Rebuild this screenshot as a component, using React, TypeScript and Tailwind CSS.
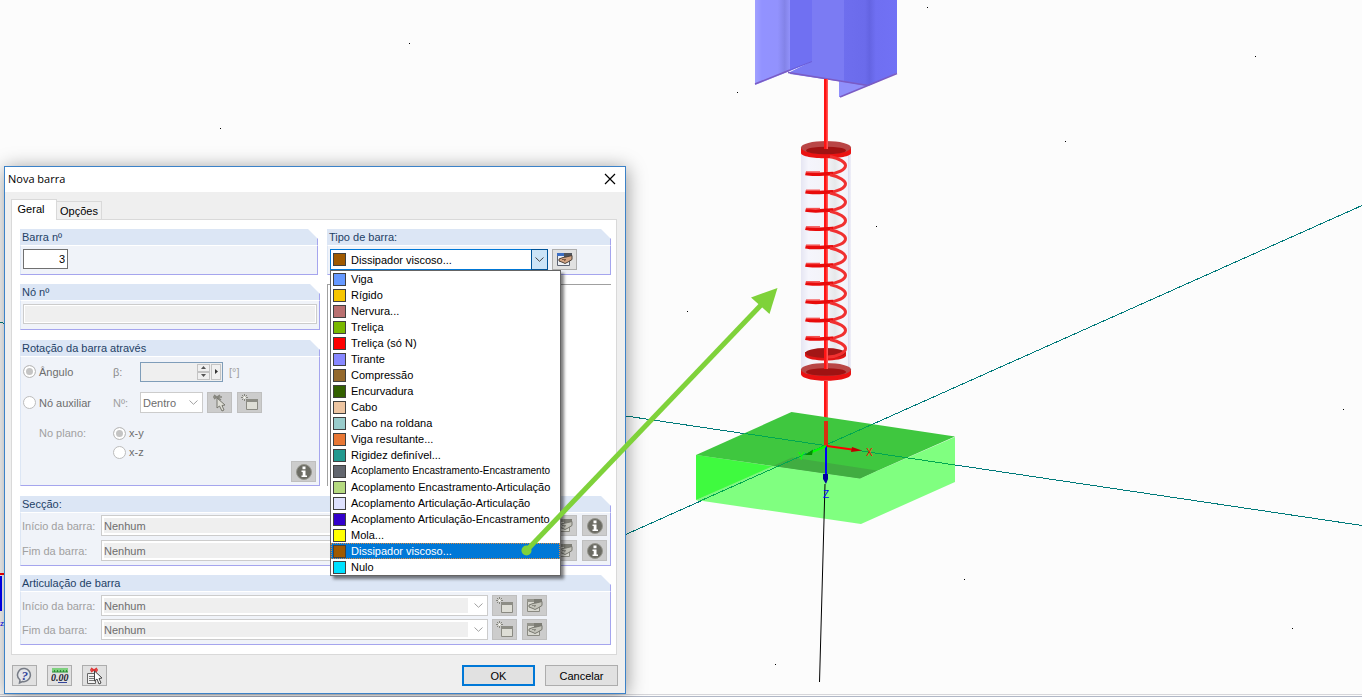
import type { ReactNode } from "react";
import clsx from "clsx";

const memberTypes = [
  { label: "Viga", color: "#6699ff" },
  { label: "Rígido", color: "#f7c600" },
  { label: "Nervura...", color: "#b97070" },
  { label: "Treliça", color: "#7ab800" },
  { label: "Treliça (só N)", color: "#ff0000" },
  { label: "Tirante", color: "#8888ff" },
  { label: "Compressão", color: "#94692d" },
  { label: "Encurvadura", color: "#336000" },
  { label: "Cabo", color: "#edc5a2" },
  { label: "Cabo na roldana", color: "#99cccc" },
  { label: "Viga resultante...", color: "#e87735" },
  { label: "Rigidez definível...", color: "#22998f" },
  { label: "Acoplamento Encastramento-Encastramento", color: "#62666e" },
  { label: "Acoplamento Encastramento-Articulação", color: "#b5da80" },
  { label: "Acoplamento Articulação-Articulação", color: "#dfe2ff" },
  { label: "Acoplamento Articulação-Encastramento", color: "#3300cc" },
  { label: "Mola...", color: "#ffff00" },
  { label: "Dissipador viscoso...", color: "#a05a00" },
  { label: "Nulo", color: "#00e1ff" },
];

const selectedType = "Dissipador viscoso...";

const gridPoints = [
  [409, 43], [927, 7], [1255, 56], [737, 92], [220, 128], [1065, 141], [876, 226],
  [687, 311], [1343, 409], [964, 579], [1292, 628], [775, 664],
];

const coils = Array.from({ length: 11 }, (_, i) => 173.5 + i * 18.3);

function Scene() {
  return (
    <svg className="absolute inset-0 h-full w-full" viewBox="0 0 1362 697" preserveAspectRatio="xMinYMin slice" aria-hidden="true">
      <defs>
        <linearGradient id="tube">
          <stop offset="0" stopColor="#e6e6f3" />
          <stop offset="0.15" stopColor="#f5f5fc" />
          <stop offset="0.5" stopColor="#f3f3f8" />
          <stop offset="0.68" stopColor="#e6e8ea" />
          <stop offset="0.82" stopColor="#f6f6fb" />
          <stop offset="0.93" stopColor="#f2f2fa" />
          <stop offset="0.95" stopColor="#dedeee" />
          <stop offset="1" stopColor="#f0f0f8" />
        </linearGradient>
        <linearGradient id="flange">
          <stop offset="0" stopColor="#a0a0ff" />
          <stop offset="0.2" stopColor="#9292ff" />
          <stop offset="0.65" stopColor="#9292fd" />
          <stop offset="0.85" stopColor="#8383e8" />
          <stop offset="1" stopColor="#9292fa" />
        </linearGradient>
        <linearGradient id="flangeRight">
          <stop offset="0" stopColor="#6e6eee" />
          <stop offset="0.4" stopColor="#6b6beb" />
          <stop offset="0.48" stopColor="#6464e2" />
          <stop offset="0.6" stopColor="#6f6ff2" />
          <stop offset="1" stopColor="#7171f5" />
        </linearGradient>
      </defs>

      {gridPoints.map(([x, y]) => (
        <rect key={`${x}-${y}`} x={x} y={y} width="1" height="1" fill="#000" />
      ))}

      <g stroke="#007a7a" strokeWidth="1" shapeRendering="crispEdges">
        <path d="M0 322.5 626 416 1362 525.5M600 546 1362 205.5" />
      </g>

      {/* steel column */}
      <path d="M755 0H790V71L755 85Z" fill="url(#flange)" />
      <path d="M790 0H812V61.5L790 71Z" fill="#7070f2" />
      <path d="M790 72 812 61V0H844V82L790 74Z" fill="#7b7bf3" />
      <path d="M839 81 868 85 841 97H839Z" fill="#9090fb" />
      <path d="M844 0H897V73L868 86 844 82Z" fill="url(#flangeRight)" />
      <path d="M755 84 790 70M788 72.5 868 85.5M840 97 897 73.5" fill="none" stroke="#7a5cc4" strokeWidth="1.5" />
      <path d="M790 70 812 61.5" stroke="#6a5cd8" />

      {/* viscous damper */}
      <rect x="801" y="150" width="50" height="222" fill="url(#tube)" />
      <path d="M801 148V153C801 160 851 160 851 153V148Z" fill="#ea1212" />
      <ellipse cx="826" cy="147.5" rx="25" ry="6.5" fill="#b94646" />
      <ellipse cx="826" cy="150.5" rx="20" ry="3.8" fill="#a01212" />
      <path d="M805 352V356C808 362 843 362 846 356V352Z" fill="#e01515" />
      <ellipse cx="825.5" cy="353" rx="20" ry="5" fill="#a31616" />
      <path d="M801 369V374C801 383 851 383 851 374V369Z" fill="#ea1212" />
      <ellipse cx="826" cy="369.5" rx="25" ry="6.5" fill="#b94646" />
      <ellipse cx="826" cy="372" rx="20" ry="3.8" fill="#a01212" />
      <path d="M824 79H828V149H824ZM824 158H828V369H824ZM824 381H828V446H824Z" fill="#ff1414" />
      <path d="M826.5 79H828V149H826.5ZM826.5 158H828V369H826.5ZM826.5 381H828V446H826.5Z" fill="#ff5555" />
      {coils.map((y, i) => (
        <g key={y} fill="none">
          <path d={`M830 ${y - 17}C840 ${y - 15} 845.5 ${y - 11} 845.5 ${y - 8}C845.5 ${y - 4} 838 ${y} 828 ${y + 0.5}`} stroke="#f03030" strokeWidth="3" />
          {i < 10 && <path d={`M805.5 ${y}C812 ${y + 1.5} 820 ${y + 1} 833 ${y}`} stroke="#e80a0a" strokeWidth="3.5" />}
          {i < 10 && <path d={`M806 ${y - 1.5}H820`} stroke="#f55050" strokeWidth="1.5" />}
        </g>
      ))}

      {/* foundation block */}
      <path d="M696 455 860 478.5 955 437V482L861 524 696 500Z" fill="#80ff80" />
      <path d="M696 455 777 467 696 500Z" fill="#3ffa3f" />
      <path d="M696 455 791.5 412 955 436.5 860 478.5Z" fill="#3fc73f" />
      <path d="M773 466 792 457.5 877 470.5 860 478.5Z" fill="#41ad41" />
      <path d="M773 466 777 467 700 501 696 500Z" fill="#80f780" />
      <g stroke="#00a850" strokeWidth="1" shapeRendering="crispEdges">
        <path d="M745 433.5 955 465M700 501 873 424" />
      </g>
      <path d="M824 421H828V446H824Z" fill="#d83010" />
      <path d="M826 446 826 474" stroke="#0000ff" strokeWidth="2" />
      <path d="M823 474H828V479L826 484 823 479Z" fill="#00009c" />
      <path d="M825 484 819.5 682" stroke="#000" />
      <path d="M826 446 812 452" stroke="#00ff00" strokeWidth="2" />
      <path d="M813 449.5 805 455 812 455Z" fill="#008f00" />
      <path d="M827 446 852 449.5" stroke="#ff0000" strokeWidth="2" />
      <path d="M852 447 862 450.5 851 452Z" fill="#c00000" />
      <g fontFamily="'Liberation Sans', sans-serif" fontSize="10">
        <text x="866" y="456" fill="#ee1100">X</text>
        <text x="798" y="460" fill="#00ff00">Y</text>
        <text x="823" y="498" fill="#0000ff">Z</text>
        <text x="0" y="626" fontSize="8" fill="#0000ff">z</text>
      </g>
      <path d="M0 574H5" stroke="#ff0000" strokeWidth="2" />
      <path d="M1 576V611" stroke="#0000ff" strokeWidth="2" />
      <path d="M0 694.5H1362" stroke="#d6d6da" />
      <path d="M0 696.5H1362" stroke="#b0b7c6" />
    </svg>
  );
}

function CalloutArrow() {
  return (
    <svg className="pointer-events-none absolute inset-0 z-20 h-full w-full" viewBox="0 0 1362 697" preserveAspectRatio="xMinYMin slice" aria-hidden="true">
      <path d="M526.5 550.5 762 304" stroke="#7fd23a" strokeWidth="5" />
      <circle cx="526.5" cy="550.5" r="5" fill="#7fd23a" />
      <path d="M777.5 288 751 297.5 769.5 314Z" fill="#7fd23a" />
    </svg>
  );
}

function Chevron({ className }: { className?: string }) {
  return (
    <svg className={clsx("h-[5px] w-[9px]", className)} viewBox="0 0 9 5" fill="none" stroke="currentColor" aria-hidden="true">
      <path d="M.5.5 4.5 4.3 8.5.5" />
    </svg>
  );
}

function NewIcon() {
  return (
    <svg className="size-[18px]" viewBox="0 0 18 18" aria-hidden="true">
      <path d="M5.5 5.5H16.5V15.5H5.5Z" fill="#deded6" stroke="#8a8a82" />
      <path d="M5 5H17V8H5Z" fill="#8d8d85" />
      <path d="M3.5 0V7M0 3.5H7M1 1 6 6M6 1 1 6" stroke="#85857d" />
      <circle cx="3.5" cy="3.5" r="1.5" fill="#f5f5f0" />
    </svg>
  );
}

function EditIcon({ active }: { active?: boolean }) {
  return (
    <svg className="size-[18px]" viewBox="0 0 18 18" aria-hidden="true">
      <path d="M1.5 2.5H13.5V14.5H1.5Z" fill={active ? "#eef0f4" : "#d8d8d0"} stroke={active ? "#5b6272" : "#8a8a82"} />
      <path d="M1 2H14V5H1Z" fill={active ? "#3d6fc4" : "#94948c"} />
      <path d="M8 2H16V6H8Z" fill={active ? "#50545c" : "#7d7d75"} />
      <path d="M3 8 7 6.5 10 6 16 4.5V8.5L12 11 9 12.5 7 11.500 3 10Z" fill={active ? "#d3a585" : "#c4c4bb"} stroke={active ? "#4d4038" : "#77776f"} />
      <path d="M6 8.5H10L8 10" fill="none" stroke={active ? "#7a5a44" : "#8b8b83"} />
    </svg>
  );
}

function PickIcon() {
  return (
    <svg className="size-[18px]" viewBox="0 0 18 18" aria-hidden="true">
      <path d="M3 1 10 6M9 1 3 5M2 3H11" stroke="#85857d" strokeWidth="1.5" />
      <path d="M6 4V14L8.5 12 11 17 13 16 11 11.5 14 11Z" fill="#deded6" stroke="#77776f" />
    </svg>
  );
}

function InfoIcon() {
  return (
    <svg className="size-4" viewBox="0 0 16 16" aria-hidden="true">
      <circle cx="8" cy="8" r="7.5" fill="#6c6c64" stroke="#96968e" />
      <path d="M6.5 2.5H9.5V5.3H6.5ZM5.5 6.5H9.5V11.5H11V13H5.5V11.5H6.7V8H5.5Z" fill="#fff" />
    </svg>
  );
}

function HelpIcon() {
  return (
    <svg className="size-[18px]" viewBox="0 0 18 18" aria-hidden="true">
      <path d="M9 1.5A6.5 6.5 0 1 1 6.5 14.5L3.5 16 4 13A6.5 6.5 0 0 1 9 1.5Z" fill="#e4e6ea" stroke="#777c86" strokeWidth="1.5" />
      <text x="5.5" y="13" fontSize="13" fontWeight="bold" fontStyle="italic" fontFamily="'Liberation Serif', serif" fill="#33449b">?</text>
    </svg>
  );
}

function UnitsIcon() {
  return (
    <svg className="size-[18px]" viewBox="0 0 18 18" aria-hidden="true">
      <path d="M1 1H17V5H1Z" fill="#7ed07e" />
      <path d="M1 5H17M3.5 3V5M6.5 3V5M9.5 3V5M12.5 3V5M15.5 3V5" stroke="#2b8f35" />
      <text x="0" y="14" fontSize="10" fontWeight="bold" fontStyle="italic" fontFamily="'Liberation Serif', serif" fill="#1d1d30">0.00</text>
      <path d="M7 15.5H16" stroke="#33449b" />
    </svg>
  );
}

function SelectListIcon() {
  return (
    <svg className="size-[18px]" viewBox="0 0 18 18" aria-hidden="true">
      <path d="M1.5 6.5H9.5V16.5H1.5Z" fill="#f2f2f2" stroke="#666" />
      <path d="M3 9.5H8M3 11.5H8M3 13.5H8" stroke="#777" />
      <path d="M5 1 11 5M11 1 5 5M4 3H12" stroke="#e03434" strokeWidth="1.5" />
      <path d="M8.5 4V14L11 12 13 17 15 16 13 11.5 16 11Z" fill="#fff" stroke="#444" />
    </svg>
  );
}

function IconButton({ label, active, children }: { label: string; active?: boolean; children: ReactNode }) {
  return (
    <button
      type="button"
      aria-label={label}
      disabled={!active}
      className={clsx(
        "flex h-[21px] w-[25px] shrink-0 items-center justify-center border",
        active ? "border-[#adadad] bg-[#e1e1e1]" : "border-[#bfbfbf] bg-[#cccccc]"
      )}
    >
      {children}
    </button>
  );
}

function Group({ title, className, children }: { title: string; className?: string; children: ReactNode }) {
  return (
    <section className={clsx("flex flex-col", className)}>
      <h2 className="h-4 border-r border-[#a5a5ee] bg-[#dce6f5] pl-0.5 leading-4 text-[#1e3f66] [clip-path:polygon(0_0,calc(100%_-_10px)_0,100%_10px,100%_100%,0_100%)]">
        {title}
      </h2>
      <div className="grow border-r border-b border-l border-t border-[#a5a5ee] border-t-white border-l-[#dce6f5] bg-[#f0f3f9]">{children}</div>
    </section>
  );
}

function EndRow({ id, label, children }: { id: string; label: string; children: ReactNode }) {
  return (
    <div className="flex h-[21px] items-center">
      <label htmlFor={id} className="w-[79px] shrink-0 whitespace-nowrap text-[#a0a0a0]">{label}</label>
      <div className="flex h-[21px] w-[387px] items-center border border-[#cccccc] bg-white p-0.5">
        <select id={id} disabled className="h-[15px] min-w-0 grow appearance-none bg-[#efefef] text-[#6d6d6d] disabled:opacity-100">
          <option>Nenhum</option>
        </select>
        <Chevron className="mr-[2px] ml-1.5 text-[#a0a0a0]" />
      </div>
      <div className="ml-1 flex gap-[5px]">{children}</div>
    </div>
  );
}

function PlaneRadio({ label, name, checked }: { label: string; name: string; checked?: boolean }) {
  return (
    <label className="flex items-center gap-[3px] text-[#6d6d6d]">
      <input
        type="radio"
        name={name}
        disabled
        defaultChecked={checked}
        className="size-[13px] shrink-0 appearance-none rounded-full border border-[#bcbcbc] bg-white checked:bg-[#c4c4c4] checked:shadow-[inset_0_0_0_2px_#fff]"
      />
      {label}
    </label>
  );
}

// names too long for the list at 11px step down one size
function MemberTypeMenu() {
  return (
    <ul role="listbox" aria-label="Tipo de barra" className="absolute top-full -left-px z-10 mt-px w-[231px] border border-[#646464] bg-white text-black shadow-[3px_3px_3px_rgba(0,0,0,0.5)]">
      {memberTypes.map((type) => (
        <li
          key={type.label}
          role="option"
          aria-selected={type.label === selectedType}
          className={clsx(
            "flex h-4 items-center gap-[5px] pl-0.5 whitespace-nowrap",
            type.label.length > 38 && "text-[10px]",
            type.label === selectedType && "bg-[#0078d7] text-white outline-1 -outline-offset-1 outline-dotted outline-[#e08a3c]"
          )}
        >
          <span className="size-[13px] shrink-0 border border-[#404040]" style={{ backgroundColor: type.color }} />
          {type.label}
        </li>
      ))}
    </ul>
  );
}

export default function App() {
  return (
    <main className="relative min-h-screen overflow-hidden bg-[#fcfcfc] pt-[166px] pb-[3px] pl-1 font-['Liberation_Sans',Arial,sans-serif] text-[11px] leading-[14px]">
      <Scene />

      <div role="dialog" aria-labelledby="dialog-title" className="relative w-[622px] max-w-full border border-[#3c82c8] bg-[#efefef] shadow-[1px_2px_18px_rgba(0,0,0,0.4)]">
        <header className="flex h-[25px] items-center justify-between bg-white pr-[9px] pb-px pl-[3px]">
          <h1 id="dialog-title" className="font-['Open_Sans',sans-serif] text-[11px] text-black">Nova barra</h1>
          <button type="button" aria-label="Fechar">
            <svg className="size-3" viewBox="0 0 12 12" stroke="#000" strokeWidth="1.2" aria-hidden="true">
              <path d="M1 1 11 11M11 1 1 11" />
            </svg>
          </button>
        </header>

        <div className="pt-[7px] pr-2 pb-[7px] pl-1.5">
          <div role="tablist" className="flex items-end">
            <button type="button" role="tab" aria-selected="true" className="relative z-[1] -mb-px h-[21px] w-[46px] border border-b-0 border-[#d9d9d9] bg-white pr-1.5 pb-0.5">Geral</button>
            <button type="button" role="tab" aria-selected="false" className="-ml-px h-[18px] w-[46px] border border-b-0 border-[#d9d9d9] bg-[#f0f0f0]">Opções</button>
          </div>

          <div role="tabpanel" className="flex flex-col gap-[10px] border border-[#d9d9d9] bg-white pt-[9px] pr-[5px] pb-[9px] pl-2">
            <div className="grid grid-cols-[300fr_284fr] gap-[7px]">
              <div className="flex flex-col gap-[9px]">
                <Group title="Barra nº" className="mr-0.5 h-[46px]">
                  <input aria-label="Barra nº" defaultValue="3" className="mt-[3px] ml-0.5 block h-5 w-[45px] border border-[#707070] bg-white pr-0.5 text-right text-black" />
                </Group>

                <Group title="Nó nº" className="h-[46px]">
                  <div className="px-0.5 pt-[3px]">
                    <input aria-label="Nó nº" disabled className="block h-5 w-full border border-[#cccccc] bg-[#efefef] shadow-[inset_0_0_0_1px_#fff]" />
                  </div>
                </Group>

                <Group title="Rotação da barra através" className="mt-px h-[146px]">
                  <div className="grid grid-cols-[90px_27px_1fr] items-center pt-1 pl-0.5">
                    <PlaneRadio name="rotacao" label="Ângulo" checked />
                    <label htmlFor="beta" className="text-[#8c8c8c]">β:</label>
                    <div className="flex h-[21px] items-center gap-1.5 text-[#a0a0a0]">
                      <div className="flex h-5 w-[83px] border border-[#7f9db9] bg-[#efefef] p-px">
                        <input id="beta" disabled className="w-0 min-w-0 grow bg-[#efefef]" />
                        <div className="flex w-[13px] shrink-0 flex-col">
                          <button type="button" aria-label="Aumentar" disabled className="flex h-2 items-center justify-center border border-[#c4c4c4] bg-[#f0f0f0]">
                            <svg className="h-[3px] w-[5px] shrink-0" viewBox="0 0 5 3" aria-hidden="true"><path d="M0 3 2.5 0 5 3Z" fill="#555" /></svg>
                          </button>
                          <button type="button" aria-label="Diminuir" disabled className="flex h-2 items-center justify-center border border-[#c4c4c4] bg-[#f0f0f0]">
                            <svg className="h-[3px] w-[5px] shrink-0" viewBox="0 0 5 3" aria-hidden="true"><path d="M0 0 2.5 3 5 0Z" fill="#555" /></svg>
                          </button>
                        </div>
                        <button type="button" aria-label="Mais" disabled className="ml-px flex w-[10px] shrink-0 items-center justify-center border border-[#c4c4c4] bg-[#f0f0f0]">
                          <svg className="h-[5px] w-[3px] shrink-0" viewBox="0 0 3 5" aria-hidden="true"><path d="M0 0 3 2.5 0 5Z" fill="#333" /></svg>
                        </button>
                      </div>
                      [°]
                    </div>
                  </div>

                  <div className="mt-[10px] grid grid-cols-[90px_27px_1fr] items-center pl-0.5">
                    <PlaneRadio name="rotacao" label="Nó auxiliar" />
                    <label htmlFor="no-auxiliar" className="text-[#a0a0a0]">Nº:</label>
                    <div className="flex items-center gap-[5px]">
                      <div className="-mr-px flex h-[21px] w-[63px] items-center border border-[#cccccc] bg-white pl-0.5">
                        <select id="no-auxiliar" disabled className="min-w-0 grow appearance-none text-[#6d6d6d] disabled:opacity-100">
                          <option>Dentro</option>
                        </select>
                        <Chevron className="mr-1 shrink-0 text-[#a0a0a0]" />
                      </div>
                      <IconButton label="Selecionar nó"><PickIcon /></IconButton>
                      <IconButton label="Novo nó"><NewIcon /></IconButton>
                    </div>
                  </div>

                  <div className="mt-[10px] grid grid-cols-[90px_1fr] items-start pl-0.5 text-[#a0a0a0]">
                    <span className="pl-4 leading-5">No plano:</span>
                    <div className="flex flex-col">
                      <div className="flex h-5 items-center"><PlaneRadio name="plano" label="x-y" checked /></div>
                      <div className="flex h-[18px] items-center"><PlaneRadio name="plano" label="x-z" /></div>
                    </div>
                  </div>
                  <div className="flex justify-end pr-[3px]">
                    <IconButton label="Informação sobre rotação"><InfoIcon /></IconButton>
                  </div>
                </Group>
              </div>

              <div className="flex flex-col gap-[9px]">
                <Group title="Tipo de barra:" className="h-[46px]">
                  <div className="flex gap-1 pt-[3px] pl-0.5">
                    <div className="relative flex h-[21px] w-[218px] items-center border border-[#0078d7] bg-white pl-0.5">
                      <span className="size-[13px] shrink-0 border border-[#404040] bg-[#a05a00]" />
                      <select aria-label="Tipo de barra" defaultValue={selectedType} className="min-w-0 grow appearance-none pl-[5px] text-black">
                        {memberTypes.map((type) => (
                          <option key={type.label}>{type.label}</option>
                        ))}
                      </select>
                      <span className="-my-px -mr-px flex h-[21px] w-[17px] shrink-0 items-center justify-center border border-[#005499] bg-[#cce4f7] text-[#444]">
                        <Chevron />
                      </span>
                      <MemberTypeMenu />
                    </div>
                    <IconButton label="Editar tipo de barra" active><EditIcon active /></IconButton>
                  </div>
                </Group>
                <div className="h-[202px] border-t border-l border-[#a0a0a0]" />
              </div>
            </div>

            <Group title="Secção:" className="h-[70px]">
              <div className="flex flex-col gap-1 pt-0.5 pl-px">
                <EndRow id="seccao-inicio" label="Início da barra:">
                  <IconButton label="Biblioteca"><NewIcon /></IconButton>
                  <IconButton label="Nova secção"><NewIcon /></IconButton>
                  <IconButton label="Editar secção"><EditIcon /></IconButton>
                  <IconButton label="Informação da secção"><InfoIcon /></IconButton>
                </EndRow>
                <EndRow id="seccao-fim" label="Fim da barra:">
                  <IconButton label="Biblioteca"><NewIcon /></IconButton>
                  <IconButton label="Nova secção"><NewIcon /></IconButton>
                  <IconButton label="Editar secção"><EditIcon /></IconButton>
                  <IconButton label="Informação da secção"><InfoIcon /></IconButton>
                </EndRow>
              </div>
            </Group>

            <Group title="Articulação de barra" className="-mt-px h-[70px]">
              <div className="flex flex-col gap-[3px] pt-[3px] pl-px">
                <EndRow id="articulacao-inicio" label="Início da barra:">
                  <IconButton label="Nova articulação"><NewIcon /></IconButton>
                  <IconButton label="Editar articulação"><EditIcon /></IconButton>
                </EndRow>
                <EndRow id="articulacao-fim" label="Fim da barra:">
                  <IconButton label="Nova articulação"><NewIcon /></IconButton>
                  <IconButton label="Editar articulação"><EditIcon /></IconButton>
                </EndRow>
              </div>
            </Group>
          </div>

          <footer className="mt-[10px] flex items-center justify-between pl-px">
            <div className="flex gap-[10px]">
              <IconButton label="Ajuda" active><HelpIcon /></IconButton>
              <IconButton label="Unidades e casas decimais" active><UnitsIcon /></IconButton>
              <IconButton label="Selecionar na lista" active><SelectListIcon /></IconButton>
            </div>
            <div className="-mr-px flex gap-[10px]">
              <button type="button" className="h-[21px] w-[73px] border-2 border-[#0078d7] bg-[#e1e1e1] text-black">OK</button>
              <button type="button" className="h-[21px] w-[73px] border border-[#adadad] bg-[#e1e1e1] text-black">Cancelar</button>
            </div>
          </footer>
        </div>
      </div>

      <CalloutArrow />
    </main>
  );
}
